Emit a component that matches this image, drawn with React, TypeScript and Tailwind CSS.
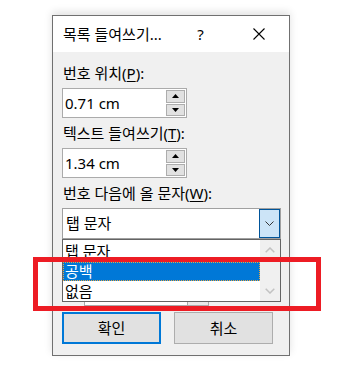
import React from "react";

function Tri({ up }: { up: boolean }) {
  return (
    <svg width="7" height="4" viewBox="0 0 7 4">
      {up ? <path d="M0 4 L3.5 0 L7 4Z" fill="#000" /> : <path d="M0 0 L3.5 4 L7 0Z" fill="#000" />}
    </svg>
  );
}

function SpinInput({ value }: { value: string }) {
  return (
    <div className="h-[30px] w-[125px] border border-[#ababab] bg-white flex">
      <div className="flex-1 flex items-center pl-[2px] text-[15px] text-black">{value}</div>
      <div className="w-[20px] flex flex-col py-px pr-px gap-px">
        <div className="flex-1 border border-[#adadad] bg-[#e1e1e1] flex items-center justify-center">
          <Tri up={true} />
        </div>
        <div className="flex-1 border border-[#adadad] bg-[#e1e1e1] flex items-center justify-center">
          <Tri up={false} />
        </div>
      </div>
    </div>
  );
}

export default function App() {
  return (
    <div className="relative w-[346px] h-[390px] bg-white overflow-hidden font-['Noto_Sans','Noto_Sans_CJK_KR',sans-serif] text-black">
      <div className="pt-[15px] pl-[52px]">
        <div className="w-[238px] border border-[#707070] shadow-[0_-3px_8px_rgba(0,0,0,0.12)]">
          {/* Title bar */}
          <div className="h-[36px] bg-white flex items-center">
            <div className="flex-1 pl-[10px] text-[15px] leading-[20px] whitespace-nowrap">목록 들여쓰기...</div>
            <div className="w-[57px] flex justify-center text-[15px] leading-[20px]">?</div>
            <div className="w-[60px] flex justify-center items-center">
              <svg width="12" height="12" viewBox="0 0 12 12">
                <path d="M0.5 0.5 L11.5 11.5 M11.5 0.5 L0.5 11.5" stroke="#000" strokeWidth="1.1" />
              </svg>
            </div>
          </div>
          {/* Body */}
          <div className="relative bg-[#f0f0f0] pt-[11px] pb-[11px] pl-[9px] pr-[8px] flex flex-col">
            <div className="h-[21px] leading-[21px] text-[15px] pl-px whitespace-nowrap">
              번호 위치(<span className="underline underline-offset-2">P</span>):
            </div>
            <div className="mt-[4px]">
              <SpinInput value="0.71 cm" />
            </div>
            <div className="mt-[5px] h-[21px] leading-[21px] text-[15px] pl-px whitespace-nowrap">
              텍스트 들여쓰기(<span className="underline underline-offset-2">T</span>):
            </div>
            <div className="mt-[4px]">
              <SpinInput value="1.34 cm" />
            </div>
            <div className="mt-[5px] h-[21px] leading-[21px] text-[15px] pl-px whitespace-nowrap">
              번호 다음에 올 문자(<span className="underline underline-offset-2">W</span>):
            </div>
            {/* Combo */}
            <div className="mt-[4px] h-[31px] w-[219px] border border-[#a0a0a0] bg-white flex">
              <div className="flex-1 flex items-center pl-[3px] text-[15px]">탭 문자</div>
              <div className="w-[21px] border border-[#005499] bg-[#cce4f7] flex items-center justify-center">
                <svg width="9" height="5" viewBox="0 0 9 5">
                  <path d="M0.5 0.5 L4.5 4.5 L8.5 0.5" stroke="#333" strokeWidth="1" fill="none" />
                </svg>
              </div>
            </div>
            {/* Underlying content partly hidden by the list */}
            <div className="h-[73px] flex flex-col justify-end pb-[6px]">
              <div className="ml-[22px] w-[125px] h-[24px] border border-[#ababab] bg-white flex">
                <div className="flex-1" />
                <div className="w-[21px] border-l border-[#ababab] bg-[#e9e9e9]" />
              </div>
            </div>
            {/* Buttons */}
            <div className="flex gap-[13px]">
              <div className="w-[99px] h-[32px] border-2 border-[#0078d7] bg-[#e1e1e1] flex items-center justify-center text-[15px]">
                확인
              </div>
              <div className="w-[99px] h-[32px] border border-[#adadad] bg-[#e1e1e1] flex items-center justify-center text-[15px]">
                취소
              </div>
            </div>

            {/* Dropdown list overlay */}
            <div className="absolute top-[187px] left-[9px] w-[219px] h-[63px] border border-[#646464] bg-white flex">
              <div className="flex-1 flex flex-col">
                <div className="h-[22px] flex items-center pl-[2px] text-[15px]">탭 문자</div>
                <div className="h-[19px] flex items-center pl-[2px] text-[15px] bg-[#0078d7] text-white outline-1 outline-dotted outline-[#e9a440] -outline-offset-1">
                  공백
                </div>
                <div className="h-[20px] flex items-center pl-[2px] text-[15px]">없음</div>
              </div>
              <div className="w-[20px] bg-[#f0f0f0] flex flex-col justify-between items-center py-[7px]">
                <svg width="10" height="6" viewBox="0 0 10 6">
                  <path d="M0.7 5.3 L5 1 L9.3 5.3" stroke="#c2c2c2" strokeWidth="1.5" fill="none" />
                </svg>
                <svg width="10" height="6" viewBox="0 0 10 6">
                  <path d="M0.7 0.7 L5 5 L9.3 0.7" stroke="#c2c2c2" strokeWidth="1.5" fill="none" />
                </svg>
              </div>
            </div>
          </div>
        </div>
      </div>
      {/* Red annotation rectangle */}
      <div className="absolute left-[33px] top-[257px] w-[288px] h-[54px] border-[5px] border-[#ed1c24]" />
    </div>
  );
}
